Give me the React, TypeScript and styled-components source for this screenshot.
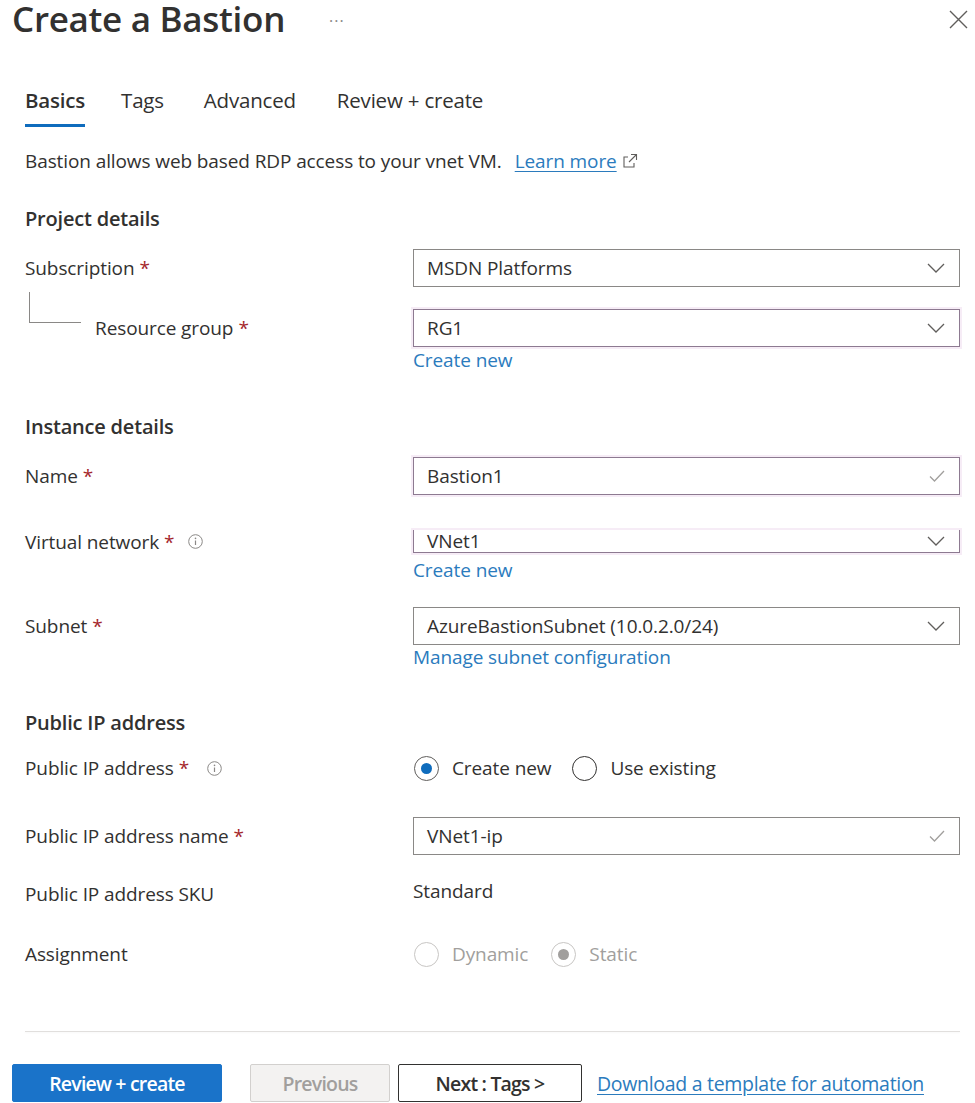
import React from "react";
import styled, { createGlobalStyle } from "styled-components";

const Global = createGlobalStyle`
  html, body { margin: 0; padding: 0; background: #ffffff; }
  body { font-family: "Open Sans", "Noto Sans", Arial, sans-serif; color: #323130; }
  * { box-sizing: border-box; }
`;

const Page = styled.div`
  width: 975px;
  height: 1103px;
  overflow: hidden;
  background: #fff;
  display: flex;
  flex-direction: column;
`;

const Header = styled.div`
  display: flex;
  align-items: center;
  height: 38px;
  padding: 0 6px 0 12px;
`;

const Title = styled.h1`
  margin: 0;
  font-size: 35px;
  font-weight: 600;
  line-height: 38px;
  color: #323130;
  letter-spacing: -0.3px;
  white-space: nowrap;
`;

const Dots = styled.span`
  margin-left: 44px;
  font-size: 16px;
  color: #8a8886;
  letter-spacing: 1px;
  line-height: 1;
  margin-top: 4px;
`;

const Close = styled.button`
  margin-left: auto;
  background: none;
  border: none;
  padding: 0;
  width: 22px;
  height: 22px;
  display: flex;
  align-items: center;
  justify-content: center;
  color: #605e5c;
`;

const Content = styled.div`
  padding: 0 15px 0 25px;
  display: flex;
  flex-direction: column;
`;

const Tabs = styled.div`
  display: flex;
  margin-top: 44px;
`;

const Tab = styled.div<{ $active?: boolean; $mr: number }>`
  font-size: 20.5px;
  line-height: 36px;
  padding-bottom: 6px;
  margin-right: ${(p) => p.$mr}px;
  border-bottom: 3px solid ${(p) => (p.$active ? "#0f6cbd" : "transparent")};
  font-weight: ${(p) => (p.$active ? 600 : 400)};
  color: #323130;
  letter-spacing: -0.2px;
`;

const Desc = styled.p`
  margin: 22px 0 0;
  font-size: 19px;
  line-height: 24px;
  display: flex;
  align-items: center;
  letter-spacing: -0.1px;
`;

const Link = styled.a`
  color: #2b7bbd;
  text-decoration: underline;
  text-underline-offset: 3px;
`;

const LearnLink = styled(Link)`
  margin-left: 13px;
`;

const ExtIcon = styled.span`
  display: inline-flex;
  margin-left: 5px;
  color: #605e5c;
`;

const SectionTitle = styled.h2<{ $top: number }>`
  margin: ${(p) => p.$top}px 0 0;
  font-size: 20px;
  font-weight: 600;
  line-height: 24px;
  color: #323130;
  letter-spacing: -0.2px;
`;

const Row = styled.div<{ $top: number }>`
  display: grid;
  grid-template-columns: 388px 547px;
  align-items: start;
  margin-top: ${(p) => p.$top}px;
`;

const Label = styled.div<{ $h?: number }>`
  display: flex;
  align-items: center;
  height: ${(p) => p.$h ?? 38}px;
  font-size: 19px;
  color: #323130;
  white-space: nowrap;
  letter-spacing: -0.1px;
`;

const Star = styled.span`
  color: #a4262c;
  margin-left: 5px;
`;

const Connector = styled.span`
  align-self: flex-start;
  width: 52px;
  height: 31px;
  margin: -17px 14px 0 4px;
  border-left: 1px solid #8a8886;
  border-bottom: 1px solid #8a8886;
`;

const Info = styled.span<{ $ml?: number }>`
  display: inline-flex;
  margin-left: ${(p) => p.$ml ?? 14}px;
  color: #8a8886;
`;

const Field = styled.div<{ $focus?: boolean; $clip?: boolean }>`
  display: flex;
  align-items: center;
  height: ${(p) => (p.$clip ? 23 : 38)}px;
  border: 1px solid ${(p) => (p.$focus ? "#8d7a91" : "#8a8886")};
  border-top: ${(p) => (p.$clip ? "none" : undefined)};
  box-shadow: ${(p) => (p.$focus ? "0 0 0 2px #f6ecf6" : "none")};
  padding: 0 14px 0 13px;
  font-size: 19px;
  color: #323130;
  background: #fff;
  letter-spacing: -0.1px;
`;

const FieldText = styled.span`
  flex: 1;
  white-space: nowrap;
`;

const FieldIcon = styled.span`
  display: inline-flex;
  color: #8a8886;
`;

const Stack = styled.div`
  display: flex;
  flex-direction: column;
  align-items: stretch;
`;

const SubLink = styled.a<{ $top?: number }>`
  color: #2b7bbd;
  font-size: 19px;
  line-height: 22px;
  margin-top: ${(p) => p.$top ?? 1}px;
  text-decoration: none;
  letter-spacing: -0.1px;
`;

const RadioGroup = styled.div`
  display: flex;
  align-items: center;
  height: 30px;
`;

const RadioOption = styled.label<{ $disabled?: boolean; $mr?: number }>`
  display: flex;
  align-items: center;
  font-size: 19px;
  color: ${(p) => (p.$disabled ? "#a19f9d" : "#323130")};
  margin-right: ${(p) => p.$mr ?? 0}px;
  letter-spacing: -0.1px;
`;

const RadioCircle = styled.span<{ $checked?: boolean; $disabled?: boolean }>`
  width: 25px;
  height: 25px;
  border-radius: 50%;
  border: 1.5px solid ${(p) => (p.$disabled ? "#c8c6c4" : p.$checked ? "#605e5c" : "#323130")};
  display: inline-flex;
  align-items: center;
  justify-content: center;
  margin: 0 13px 0 1px;
  &::after {
    content: "";
    width: 11px;
    height: 11px;
    border-radius: 50%;
    background: ${(p) => (p.$checked ? (p.$disabled ? "#a19f9d" : "#0f6cbd") : "transparent")};
  }
`;

const Value = styled.div`
  font-size: 19px;
  line-height: 24px;
  letter-spacing: -0.1px;
`;

const Divider = styled.hr`
  margin: 62px 0 0;
  border: none;
  height: 1px;
  background: #e1dfdd;
  box-shadow: 0 1px 2px rgba(0,0,0,0.04);
`;

const Footer = styled.div`
  display: flex;
  align-items: center;
  padding-left: 12px;
  margin-top: 32px;
`;

const Button = styled.button<{ $variant: "primary" | "disabled" | "default"; $w: number; $ml?: number }>`
  width: ${(p) => p.$w}px;
  height: 38px;
  margin-left: ${(p) => p.$ml ?? 0}px;
  font-family: "Open Sans", Arial, sans-serif;
  font-size: 19.5px;
  font-weight: 600;
  letter-spacing: -0.8px;
  border-radius: 2px;
  background: ${(p) => (p.$variant === "primary" ? "#1a73c9" : p.$variant === "disabled" ? "#f3f2f1" : "#fff")};
  color: ${(p) => (p.$variant === "primary" ? "#fff" : p.$variant === "disabled" ? "#a19f9d" : "#323130")};
  border: 1px solid ${(p) => (p.$variant === "primary" ? "#1a73c9" : p.$variant === "disabled" ? "#d2d0ce" : "#323130")};
`;

const FooterLink = styled(Link)`
  margin-left: 15px;
  font-size: 19.5px;
  letter-spacing: -0.3px;
`;

const Chevron = () => (
  <svg width="18" height="10" viewBox="0 0 18 10" fill="none">
    <path d="M1 1l8 8 8-8" stroke="#605e5c" strokeWidth="1.3" />
  </svg>
);

const Check = () => (
  <svg width="16" height="12" viewBox="0 0 16 12" fill="none">
    <path d="M1 6.5l4.5 4.5L15 1" stroke="#a19f9d" strokeWidth="1.3" />
  </svg>
);

const InfoIcon = () => (
  <svg width="15" height="15" viewBox="0 0 15 15" fill="none">
    <circle cx="7.5" cy="7.5" r="6.8" stroke="#8a8886" strokeWidth="1" />
    <path d="M7.5 6.5v4.5" stroke="#8a8886" strokeWidth="1.2" />
    <circle cx="7.5" cy="4.4" r="0.8" fill="#8a8886" />
  </svg>
);

const ExternalIcon = () => (
  <svg width="16" height="16" viewBox="0 0 16 16" fill="none">
    <path d="M6 4H2v10h10v-4" stroke="#605e5c" strokeWidth="1.1" />
    <path d="M9 1.5h5.5V7M14.5 1.5L7 9" stroke="#605e5c" strokeWidth="1.1" />
  </svg>
);

export default function App() {
  return (
    <Page>
      <Global />
      <Header>
        <Title>Create a Bastion</Title>
        <Dots>···</Dots>
        <Close aria-label="Close">
          <svg width="19" height="19" viewBox="0 0 19 19">
            <path d="M1 1l17 17M18 1L1 18" stroke="#605e5c" strokeWidth="1.4" />
          </svg>
        </Close>
      </Header>
      <Content>
        <Tabs>
          <Tab $active $mr={36}>Basics</Tab>
          <Tab $mr={40}>Tags</Tab>
          <Tab $mr={41}>Advanced</Tab>
          <Tab $mr={0}>Review + create</Tab>
        </Tabs>
        <Desc>
          Bastion allows web based RDP access to your vnet VM.
          <LearnLink href="#">Learn more</LearnLink>
          <ExtIcon><ExternalIcon /></ExtIcon>
        </Desc>

        <SectionTitle $top={34}>Project details</SectionTitle>
        <Row $top={18}>
          <Label>Subscription<Star>*</Star></Label>
          <Field>
            <FieldText>MSDN Platforms</FieldText>
            <FieldIcon><Chevron /></FieldIcon>
          </Field>
        </Row>
        <Row $top={22}>
          <Label>
            <Connector />
            Resource group<Star>*</Star>
          </Label>
          <Stack>
            <Field $focus>
              <FieldText>RG1</FieldText>
              <FieldIcon><Chevron /></FieldIcon>
            </Field>
            <SubLink $top={2}>Create new</SubLink>
          </Stack>
        </Row>

        <SectionTitle $top={44}>Instance details</SectionTitle>
        <Row $top={18}>
          <Label>Name<Star>*</Star></Label>
          <Field $focus>
            <FieldText>Bastion1</FieldText>
            <FieldIcon><Check /></FieldIcon>
          </Field>
        </Row>
        <Row $top={35}>
          <Label $h={23}>
            Virtual network<Star>*</Star>
            <Info><InfoIcon /></Info>
          </Label>
          <Stack>
            <Field $focus $clip>
              <FieldText>VNet1</FieldText>
              <FieldIcon><Chevron /></FieldIcon>
            </Field>
            <SubLink $top={6}>Create new</SubLink>
          </Stack>
        </Row>
        <Row $top={26}>
          <Label>Subnet<Star>*</Star></Label>
          <Stack>
            <Field>
              <FieldText>AzureBastionSubnet (10.0.2.0/24)</FieldText>
              <FieldIcon><Chevron /></FieldIcon>
            </Field>
            <SubLink $top={1}>Manage subnet configuration</SubLink>
          </Stack>
        </Row>

        <SectionTitle $top={43}>Public IP address</SectionTitle>
        <Row $top={18}>
          <Label $h={30}>
            Public IP address<Star>*</Star>
            <Info $ml={18}><InfoIcon /></Info>
          </Label>
          <RadioGroup>
            <RadioOption $mr={20}>
              <RadioCircle $checked />
              Create new
            </RadioOption>
            <RadioOption>
              <RadioCircle />
              Use existing
            </RadioOption>
          </RadioGroup>
        </Row>
        <Row $top={34}>
          <Label>Public IP address name<Star>*</Star></Label>
          <Field>
            <FieldText>VNet1-ip</FieldText>
            <FieldIcon><Check /></FieldIcon>
          </Field>
        </Row>
        <Row $top={24}>
          <Label $h={30}>Public IP address SKU</Label>
          <Value>Standard</Value>
        </Row>
        <Row $top={30}>
          <Label $h={30}>Assignment</Label>
          <RadioGroup>
            <RadioOption $disabled $mr={22}>
              <RadioCircle $disabled />
              Dynamic
            </RadioOption>
            <RadioOption $disabled>
              <RadioCircle $disabled $checked />
              Static
            </RadioOption>
          </RadioGroup>
        </Row>
        <Divider />
      </Content>
      <Footer>
        <Button $variant="primary" $w={210}>Review + create</Button>
        <Button $variant="disabled" $w={140} $ml={28}>Previous</Button>
        <Button $variant="default" $w={184} $ml={8}>Next : Tags &gt;</Button>
        <FooterLink href="#">Download a template for automation</FooterLink>
      </Footer>
    </Page>
  );
}
